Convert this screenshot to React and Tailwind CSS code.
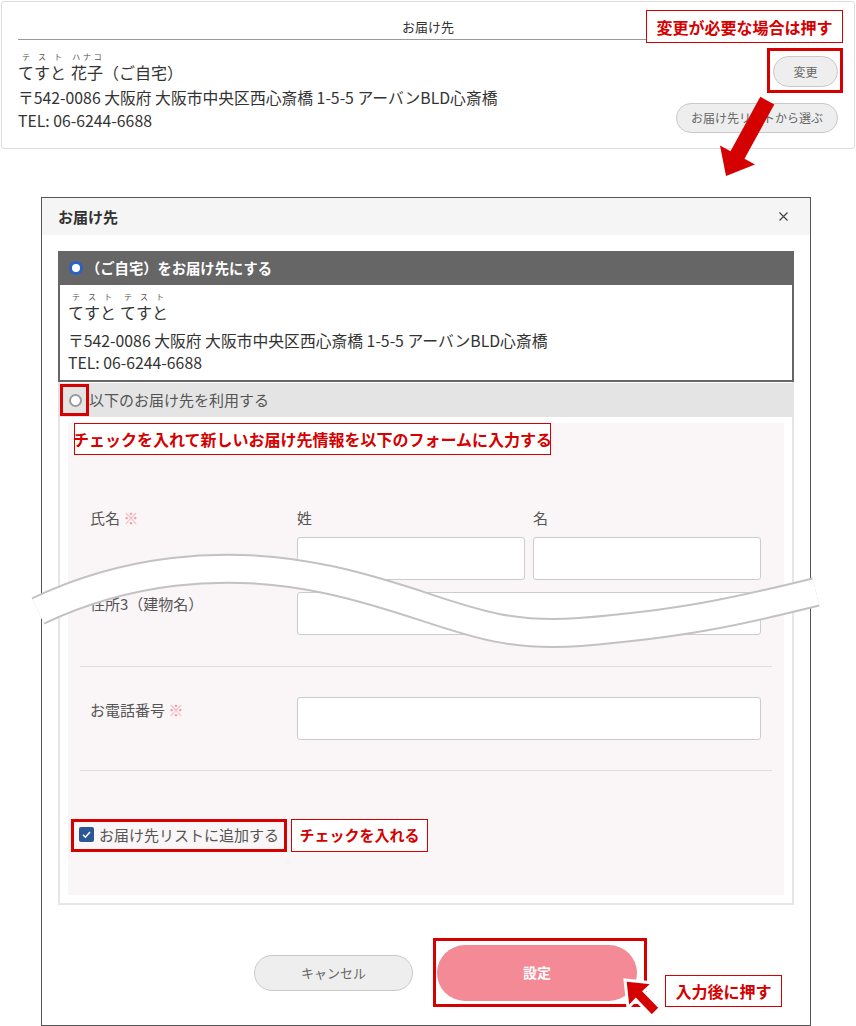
import React from "react";

function Ruby({ base, rt, className = "" }) {
  return (
    <span className={`inline-flex flex-col ${className}`}>
      <span className="flex justify-around text-[8px] leading-[10px] text-[#555]">
        {rt.split("").map((c, i) => (
          <span key={i}>{c}</span>
        ))}
      </span>
      <span>{base}</span>
    </span>
  );
}

function Callout({ className, children }) {
  return (
    <div
      className={`absolute flex items-center justify-center whitespace-nowrap border border-[#d50000] bg-white font-bold text-[#d50000] ${className}`}
    >
      {children}
    </div>
  );
}

function Field({ className }) {
  return (
    <input
      readOnly
      className={`block h-[43px] rounded-[3px] border border-[#cccccc] bg-white ${className}`}
    />
  );
}

const BAND = "M38 611 C120 572 220 556 330 580 S480 640 580 632 S735 612 816 592";

export default function App() {
  return (
    <div className="relative h-[1026px] w-[856px] overflow-hidden bg-white font-['Noto_Sans_CJK_JP','Noto_Sans',sans-serif] text-[#333]">
      {/* current delivery address */}
      <section className="relative ml-[1px] mt-[1px] h-[148px] w-[854px] rounded-[3px] border border-[#dcdcdc] px-[16px]">
        <div className="border-b border-[#9a9a9a] pb-[4px] pt-[16px] text-center text-[13px] leading-[17px]">
          お届け先
        </div>
        <div className="flex justify-between">
          <div className="pt-[12px]">
            <div className="flex items-end text-[16px] leading-[20px]">
              <Ruby base="てすと" rt="テスト" />
              <Ruby base="花子" rt="ハナコ" className="ml-[5px]" />
              <span>（ご自宅）</span>
            </div>
            <p className="mt-[4px] text-[15.8px] leading-[23px]">
              〒542-0086 大阪府 大阪市中央区西心斎橋 1-5-5 アーバンBLD心斎橋
            </p>
            <p className="text-[15.8px] leading-[23px]">TEL: 06-6244-6688</p>
          </div>
          <div className="flex flex-col items-end gap-[16px] pt-[16px]">
            <div className="relative">
              <button className="h-[31px] w-[65px] rounded-full border border-[#c9c9c9] bg-[#eeeeee] text-[12px] text-[#666]">
                変更
              </button>
              <span className="absolute -bottom-[6px] -left-[6px] -right-[5px] -top-[8px] border-[3px] border-[#d50000]" />
            </div>
            <button className="h-[30px] w-[162px] rounded-full border border-[#c9c9c9] bg-[#eeeeee] text-[12px] text-[#666]">
              お届け先リストから選ぶ
            </button>
          </div>
        </div>
        <Callout className="left-[644px] top-[8px] h-[33px] w-[197px] text-[16px]">
          変更が必要な場合は押す
        </Callout>
      </section>

      {/* address dialog */}
      <div className="relative ml-[41px] mt-[48px] h-[829px] w-[770px] border border-[#555] bg-white">
        <div className="flex h-[37px] items-center justify-between bg-[#f5f5f5] pl-[16px] pr-[22px]">
          <h2 className="text-[15px] font-bold leading-[20px] text-[#333]">お届け先</h2>
          <svg width="9" height="9" viewBox="0 0 9 9">
            <path d="M0.5 0.5 L8.5 8.5 M8.5 0.5 L0.5 8.5" stroke="#444" strokeWidth="1.2" />
          </svg>
        </div>

        <div className="mx-[16px] mt-[16px] border-2 border-[#e6e6e6]">
          {/* registered address option */}
          <div className="-mx-[2px] -mt-[2px]">
            <div className="flex h-[34px] items-center gap-[3px] bg-[#666] pl-[11px] text-[14.3px] font-bold text-white">
              <span className="h-[14px] w-[14px] rounded-full border-[3px] border-[#2a62c4] bg-white" />
              <span>（ご自宅）をお届け先にする</span>
            </div>
            <div className="border-2 border-t-0 border-[#666] pb-[6px] pl-[8px] pt-[7px]">
              <div className="flex items-end gap-[4px] text-[16px] leading-[20px]">
                <Ruby base="てすと" rt="テスト" />
                <Ruby base="てすと" rt="テスト" />
              </div>
              <p className="mt-[8px] text-[15.8px] leading-[22px]">
                〒542-0086 大阪府 大阪市中央区西心斎橋 1-5-5 アーバンBLD心斎橋
              </p>
              <p className="text-[15.8px] leading-[22px]">TEL: 06-6244-6688</p>
            </div>
          </div>

          {/* new address option */}
          <div className="-mx-[2px] mt-[1px] flex h-[34px] items-center bg-[#e4e4e4] pl-[11px] text-[15px] text-[#555]">
            <span className="relative mr-[7px]">
              <span className="block h-[13px] w-[13px] rounded-full border-2 border-[#9a9a9a] bg-white" />
              <span className="absolute -bottom-[9px] -left-[9px] -right-[7px] -top-[10px] border-[3px] border-[#d50000]" />
            </span>
            <span>以下のお届け先を利用する</span>
          </div>

          <div className="relative mx-[8px] mb-[8px] mt-[6px] bg-[#faf5f6] pb-[50px] pt-[85px] text-[15px] leading-[20px] text-[#555]">
            <Callout className="left-[6px] top-0 h-[32px] w-[477px] text-[16px]">
              チェックを入れて新しいお届け先情報を以下のフォームに入力する
            </Callout>

            <div className="flex pl-[22px]">
              <div className="w-[207px]">
                氏名 <span className="text-[#f29aa6]">※</span>
              </div>
              <div className="flex gap-[8px]">
                <div>
                  <div className="mb-[9px]">姓</div>
                  <Field className="w-[228px]" />
                </div>
                <div>
                  <div className="mb-[9px]">名</div>
                  <Field className="w-[228px]" />
                </div>
              </div>
            </div>

            <div className="mt-[12px] flex pl-[22px]">
              <div className="w-[207px] pt-[2px]">住所3（建物名）</div>
              <Field className="w-[464px]" />
            </div>

            <div className="mx-[12px] mt-[31px] h-px bg-[#dddddd]" />

            <div className="mt-[30px] flex pl-[22px]">
              <div className="w-[207px] pt-[3px]">
                お電話番号 <span className="text-[#f29aa6]">※</span>
              </div>
              <Field className="w-[464px]" />
            </div>

            <div className="mx-[12px] mt-[30px] h-px bg-[#dddddd]" />

            <div className="mt-[53px] pl-[11px]">
              <label className="relative inline-flex items-center gap-[5px]">
                <span className="flex h-[15px] w-[15px] items-center justify-center rounded-[2px] bg-[#2b5797]">
                  <svg width="11" height="11" viewBox="0 0 11 11">
                    <path d="M2 5.8 L4.4 8.2 L9 3" fill="none" stroke="#fff" strokeWidth="1.6" />
                  </svg>
                </span>
                <span>お届け先リストに追加する</span>
                <span className="absolute -bottom-[7px] -left-[8px] -right-[8px] -top-[6px] border-[3px] border-[#d50000]" />
                <Callout className="-top-[6px] left-[calc(100%+12px)] h-[33px] w-[137px] text-[15px]">
                  チェックを入れる
                </Callout>
              </label>
            </div>
          </div>
        </div>

        {/* dialog actions */}
        <div className="mt-[40px] flex items-center justify-center gap-[24px] pl-[39px]">
          <button className="h-[36px] w-[159px] rounded-full border border-[#c9c9c9] bg-[#eeeeee] text-[13px] text-[#666]">
            キャンセル
          </button>
          <div className="relative">
            <button className="h-[56px] w-[200px] rounded-full bg-[#f48a96] text-[14px] font-bold text-white">
              設定
            </button>
            <span className="absolute -bottom-[6px] -left-[4px] -right-[10px] -top-[7px] border-[3px] border-[#d50000]" />
            <Callout className="left-[calc(100%+28px)] top-[30px] h-[32px] w-[117px] text-[16px]">
              入力後に押す
            </Callout>
          </div>
        </div>
      </div>

      {/* overlay drawings: omission band and pointer arrows */}
      <svg
        className="pointer-events-none absolute left-0 top-0"
        width="856"
        height="1026"
        viewBox="0 0 856 1026"
      >
        <path d={BAND} fill="none" stroke="#c2c2c2" strokeWidth="30" />
        <path d={BAND} fill="none" stroke="#ffffff" strokeWidth="26" />
        <polygon
          points="760.3,96.8 774.3,104.4 744.5,158.8 755,164.6 726,176 720,145.4 730.5,151.2"
          fill="#d50000"
        />
        <polygon
          points="625,980 653,983 644.2,991.3 660.2,1007.8 651.8,1016.2 635.8,999.7 628,1008"
          fill="#d50000"
          stroke="#ffffff"
          strokeWidth="3"
          strokeLinejoin="miter"
        />
      </svg>
    </div>
  );
}
